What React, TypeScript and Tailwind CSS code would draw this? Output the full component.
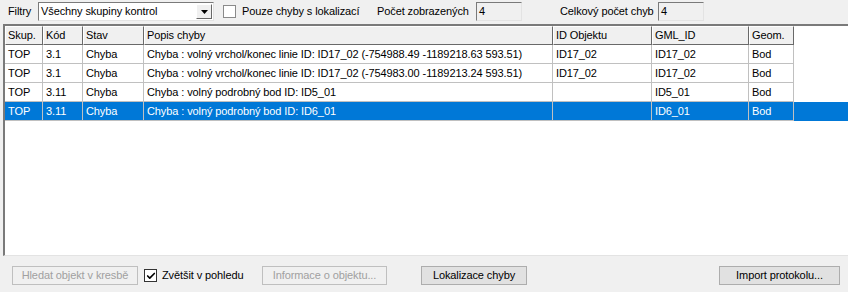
import { Check } from 'lucide-react';

const cols = [38, 40, 61, 409, 99, 97, 45];
const heads = ['Skup.', 'Kód', 'Stav', 'Popis chyby', 'ID Objektu', 'GML_ID', 'Geom.'];

const rows = [
    ['TOP', '3.1', 'Chyba', 'Chyba : volný vrchol/konec linie ID: ID17_02 (-754988.49 -1189218.63 593.51)', 'ID17_02', 'ID17_02', 'Bod'],
    ['TOP', '3.1', 'Chyba', 'Chyba : volný vrchol/konec linie ID: ID17_02 (-754983.00 -1189213.24 593.51)', 'ID17_02', 'ID17_02', 'Bod'],
    ['TOP', '3.11', 'Chyba', 'Chyba : volný podrobný bod ID: ID5_01', '', 'ID5_01', 'Bod'],
    ['TOP', '3.11', 'Chyba', 'Chyba : volný podrobný bod ID: ID6_01', '', 'ID6_01', 'Bod'],
];

const Btn = ({ label, disabled, w }: { label: string; disabled?: boolean; w: string }) => (
    <div
        className={`${w} shrink-0 h-[19px] flex items-center justify-center border ${disabled ? 'text-[#a0a0a0] bg-[#f0f0f0] border-[#bfbfbf]' : 'text-black bg-[#e1e1e1] border-[#adadad]'}`}
    >
        {label}
    </div>
);

// zapuštěné pole (sunken)
const sunken = 'border border-t-[#7a7a7a] border-l-[#7a7a7a] border-b-[#e3e3e3] border-r-[#e3e3e3]';

export default function App() {
    return (
        <div className="w-[848px] h-[292px] bg-[#f0f0f0] text-[11px] tracking-[-0.1px] text-black flex flex-col overflow-hidden" style={{ fontFamily: '"Liberation Sans", Arial, sans-serif' }}>
            {/* filtry */}
            <div className="h-[22px] flex items-center pt-[1px]">
                <span className="w-[38px] shrink-0 pl-[8px]">Filtry</span>
                <div className={`w-[176px] shrink-0 h-[19px] bg-white ${sunken} flex items-center`}>
                    <span className="flex-1 pl-[2px]">Všechny skupiny kontrol</span>
                    <div className="w-[16px] h-[15px] mr-[1px] bg-[#f0f0f0] border border-t-white border-l-white border-b-[#696969] border-r-[#696969] flex items-center justify-center">
                        <svg width="7" height="4" viewBox="0 0 7 4"><path d="M0 0h7L3.5 4z" fill="#000" /></svg>
                    </div>
                </div>
                <div className="ml-[9px] w-[13px] h-[13px] shrink-0 bg-white border border-[#8a8a8a]" />
                <span className="ml-[6px] w-[135px] shrink-0 whitespace-nowrap">Pouze chyby s lokalizací</span>
                <span className="w-[99px] shrink-0 whitespace-nowrap">Počet zobrazených</span>
                <div className={`w-[46px] shrink-0 h-[19px] ${sunken} flex items-center pl-[2px]`}>4</div>
                <span className="ml-[38px] w-[98px] shrink-0 whitespace-nowrap">Celkový počet chyb</span>
                <div className={`w-[46px] shrink-0 h-[19px] ${sunken} flex items-center pl-[2px]`}>4</div>
            </div>

            {/* seznam */}
            <div className="mt-[2px] ml-[3px] h-[232px] bg-white border-t-2 border-l-2 border-t-[#7a7a7a] border-l-[#7a7a7a] border-b border-b-[#e3e3e3] border-r-0">
                <div className="flex h-[19px]">
                    {heads.map((h, i) => (
                        <div
                            key={h}
                            style={{ width: cols[i] }}
                            className="shrink-0 bg-[#f0f0f0] border-t border-l border-t-white border-l-white border-b border-r border-b-[#696969] border-r-[#696969] flex items-center pl-[2px]"
                        >
                            {h}
                        </div>
                    ))}
                </div>
                {rows.map((r, ri) => {
                    const sel = ri === 3;
                    return (
                        <div key={ri} className={`flex h-[19px] ${sel ? 'bg-[#0078d7] text-white' : ''}`}>
                            {r.map((c, ci) => (
                                <div
                                    key={ci}
                                    style={{ width: cols[ci] }}
                                    className="shrink-0 border-r border-b border-[#c0c0c0] flex items-center pl-[3px] whitespace-nowrap overflow-hidden"
                                >
                                    {c}
                                </div>
                            ))}
                        </div>
                    );
                })}
            </div>

            {/* tlačítka */}
            <div className="flex items-center mt-[10px]">
                <div className="ml-[12px]"><Btn label="Hledat objekt v kresbě" disabled w="w-[126px]" /></div>
                <div className="ml-[6px] w-[118px] shrink-0 flex items-center">
                    <div className="w-[13px] h-[13px] bg-white border border-[#333] flex items-center justify-center">
                        <Check className="w-[10px] h-[10px]" strokeWidth={4} />
                    </div>
                    <span className="ml-[5px] whitespace-nowrap">Zvětšit v pohledu</span>
                </div>
                <Btn label="Informace o objektu..." disabled w="w-[125px]" />
                <div className="ml-[34px]"><Btn label="Lokalizace chyby" w="w-[106px]" /></div>
                <div className="ml-[192px]"><Btn label="Import protokolu..." w="w-[121px]" /></div>
            </div>
        </div>
    );
}
